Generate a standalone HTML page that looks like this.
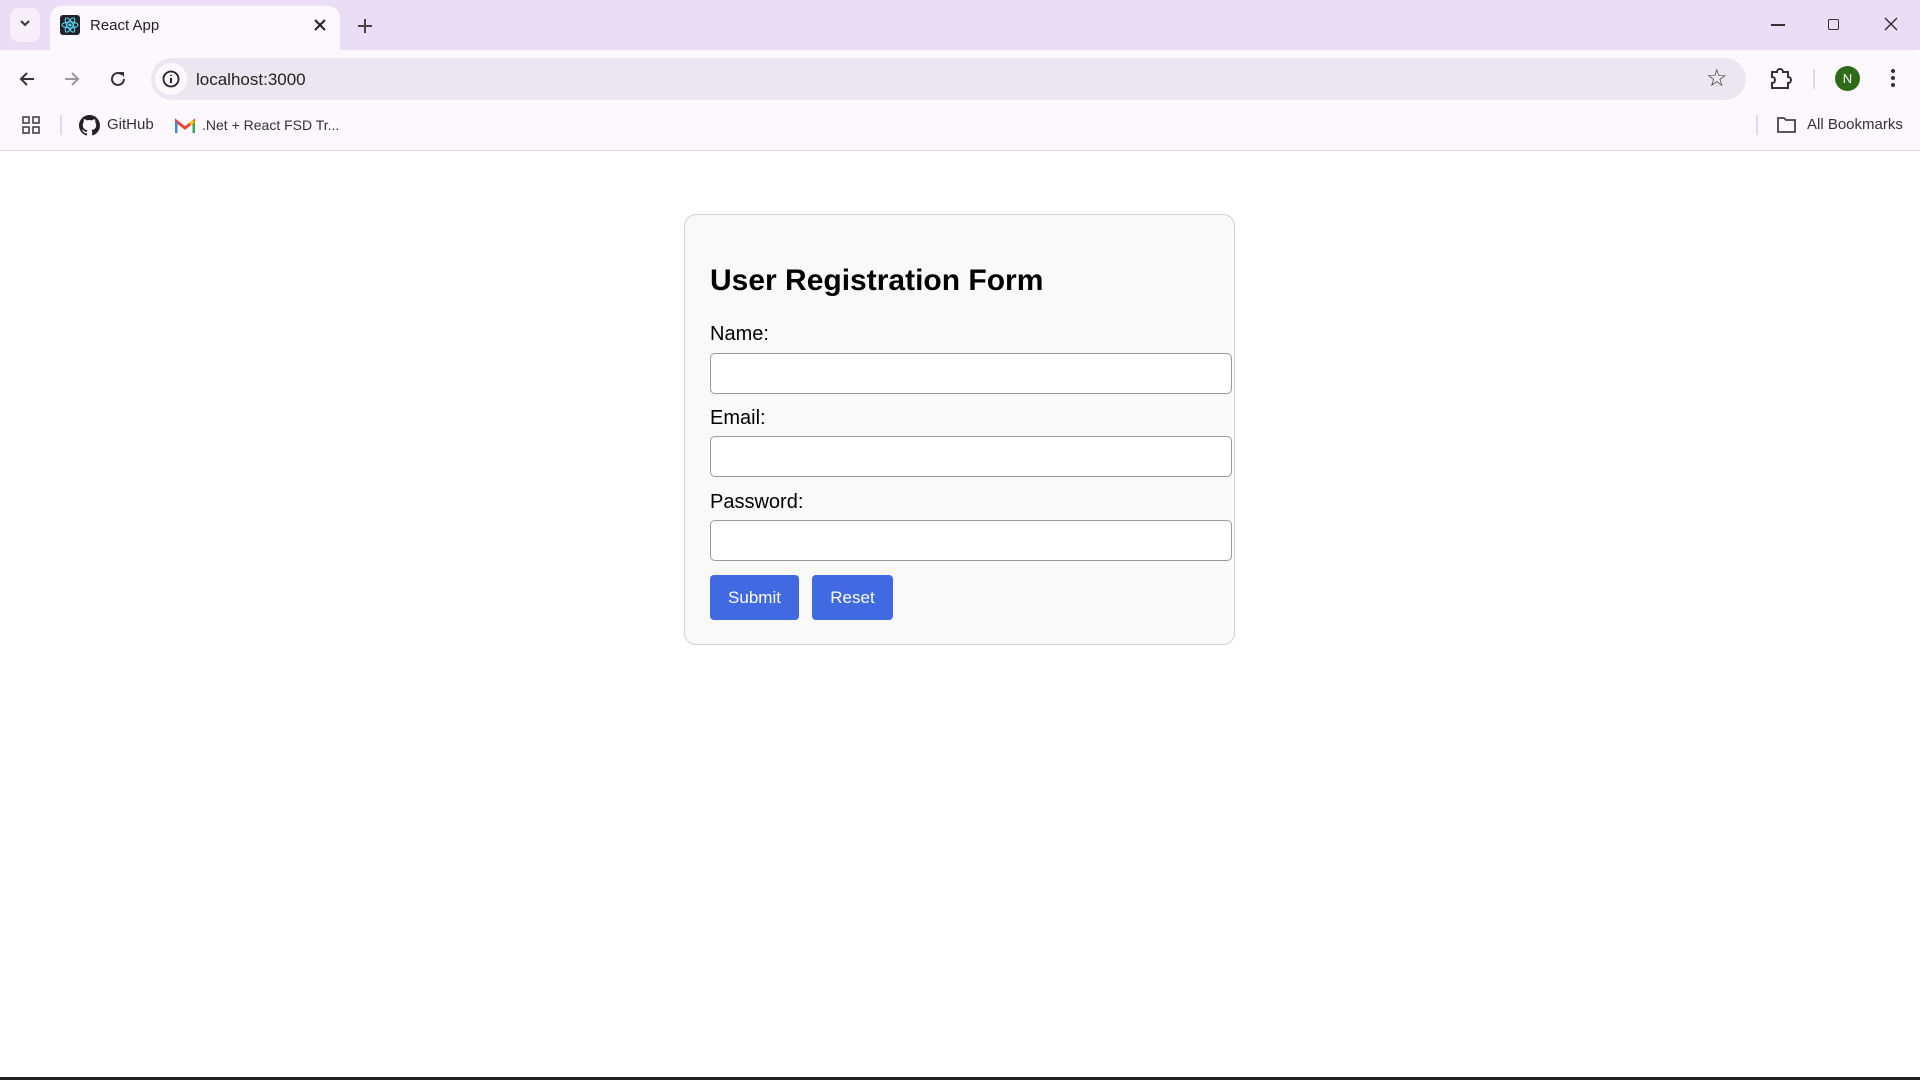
<!DOCTYPE html>
<html><head><meta charset="utf-8"><style>
*{box-sizing:border-box;margin:0;padding:0}
body{width:1920px;height:1080px;overflow:hidden;background:#fff;font-family:"Liberation Sans",sans-serif;position:relative}
.strip{position:absolute;left:0;top:0;width:1920px;height:50px;background:#e9def5}
.tb{position:absolute;left:0;top:50px;width:1920px;height:101px;background:#fdf7fe;border-bottom:1px solid #e2dde6;border-top-right-radius:12px}
.tab{position:absolute;left:50px;top:6px;width:290px;height:45px;background:#fdf7fe;border-radius:12px 12px 0 0}
.abs{position:absolute}
.omni{position:absolute;left:151px;top:58px;width:1595px;height:42px;background:#ece6f0;border-radius:21px}
.card{position:absolute;left:684px;top:214px;width:551px;height:431px;background:#f9f9f9;border:1px solid #d2d2d2;border-radius:12px}
h2{position:absolute;left:710px;top:264px;font-size:30px;font-weight:bold;color:#000}
label{position:absolute;left:710px;font-size:20px;color:#000}
.in{position:absolute;left:710px;width:522px;height:41px;background:#fff;border:1.5px solid #9a9a9a;border-radius:5px}
.btn{position:absolute;top:575px;height:45px;background:#4169e1;color:#fff;border-radius:4px;font-size:17px;text-align:center;line-height:45px}
</style></head><body>
<div class="strip"></div>
<div class="abs" style="left:10px;top:8px;width:30px;height:34px;background:#f7f0fb;border-radius:9px"></div>
<svg class="abs" style="left:19px;top:19px" width="12" height="10"><path d="M2 2l4 4 4-4" stroke="#333" stroke-width="2" fill="none"/></svg>
<div class="tab"></div>
<div class="abs" style="left:60px;top:15px;width:20px;height:20px;background:#20232a;border-radius:3px"></div>
<svg class="abs" style="left:60px;top:15px" width="20" height="20"><g fill="none" stroke="#61dafb" stroke-width="1"><ellipse cx="10" cy="10" rx="8" ry="3"/><ellipse cx="10" cy="10" rx="8" ry="3" transform="rotate(60 10 10)"/><ellipse cx="10" cy="10" rx="8" ry="3" transform="rotate(120 10 10)"/></g><circle cx="10" cy="10" r="1.5" fill="#61dafb"/></svg>
<div class="abs" style="left:90px;top:17px;font-size:15px;color:#222">React App</div>
<svg class="abs" style="left:313px;top:18px" width="14" height="14"><path d="M2 2l10 10M12 2L2 12" stroke="#222" stroke-width="2"/></svg>
<svg class="abs" style="left:357px;top:18px" width="16" height="16"><path d="M8 1v14M1 8h14" stroke="#444" stroke-width="2"/></svg>
<div class="abs" style="left:1771px;top:24px;width:14px;height:1.5px;background:#333"></div>
<div class="abs" style="left:1828px;top:19px;width:11px;height:11px;border:1.5px solid #333;border-radius:2px"></div>
<svg class="abs" style="left:1884px;top:17px" width="14" height="14"><path d="M1 1l12 12M13 1L1 13" stroke="#333" stroke-width="1.5"/></svg>
<div class="tb"></div>
<svg class="abs" style="left:16px;top:68px" width="22" height="22"><path d="M18 11H5M11 5l-6 6 6 6" stroke="#333" stroke-width="2" fill="none"/></svg>
<svg class="abs" style="left:61px;top:68px" width="22" height="22"><path d="M4 11h13M11 5l6 6-6 6" stroke="#999" stroke-width="2" fill="none"/></svg>
<svg class="abs" style="left:107px;top:68px" width="22" height="22"><path d="M17 11a6 6 0 1 1-2-4.5" stroke="#333" stroke-width="2" fill="none"/><path d="M12 4h5v5z" fill="#333"/></svg>
<div class="omni"></div>
<div class="abs" style="left:155px;top:63px;width:32px;height:32px;background:#fdf7fe;border-radius:16px"></div>
<svg class="abs" style="left:161px;top:69px" width="20" height="20"><circle cx="10" cy="10" r="7.5" stroke="#222" stroke-width="1.8" fill="none"/><path d="M10 9v5M10 6v1" stroke="#222" stroke-width="2"/></svg>
<div class="abs" style="left:196px;top:70px;font-size:17px;color:#222">localhost:3000</div>
<div class="abs" style="left:1706px;top:64px;font-size:24px;color:#333">☆</div>
<svg class="abs" style="left:1768px;top:67px" width="26" height="24"><path d="M4 5h5a3 3 0 0 1 6 0h5v5a3 3 0 0 1 0 6v5H4v-5a3 3 0 0 0 0-6z" stroke="#333" stroke-width="2" fill="none"/></svg>
<div class="abs" style="left:1813px;top:69px;width:2px;height:20px;background:#e3d8f0"></div>
<div class="abs" style="left:1835px;top:66px;width:25px;height:25px;border-radius:50%;background:#2e6a18;color:#fff;font-size:13px;text-align:center;line-height:25px">N</div>
<div class="abs" style="left:1891px;top:69px;width:4px;height:4px;border-radius:2px;background:#333;box-shadow:0 7px 0 #333,0 14px 0 #333"></div>
<svg class="abs" style="left:22px;top:116px" width="20" height="20"><g fill="none" stroke="#444" stroke-width="1.6"><rect x="1" y="1" width="6" height="6"/><rect x="11" y="1" width="6" height="6"/><rect x="1" y="11" width="6" height="6"/><rect x="11" y="11" width="6" height="6"/></g></svg>
<div class="abs" style="left:60px;top:115px;width:2px;height:20px;background:#e3d8f0"></div>
<svg class="abs" style="left:79px;top:115px" width="21" height="21" viewBox="0 0 16 16"><path fill="#222" d="M8 0C3.6 0 0 3.6 0 8c0 3.5 2.3 6.5 5.5 7.6.4.1.5-.2.5-.4v-1.4c-2.2.5-2.7-1-2.7-1-.4-.9-.9-1.2-.9-1.2-.7-.5.1-.5.1-.5.8.1 1.2.8 1.2.8.7 1.2 1.9.9 2.3.7.1-.5.3-.9.5-1.1-1.8-.2-3.6-.9-3.6-4 0-.9.3-1.6.8-2.1-.1-.2-.4-1 .1-2.1 0 0 .7-.2 2.2.8.6-.2 1.3-.3 2-.3s1.4.1 2 .3c1.5-1 2.2-.8 2.2-.8.4 1.1.2 1.9.1 2.1.5.6.8 1.3.8 2.1 0 3.1-1.9 3.7-3.6 3.9.3.3.5.8.5 1.5v2.2c0 .2.1.5.6.4C13.7 14.5 16 11.5 16 8c0-4.4-3.6-8-8-8z"/></svg>
<div class="abs" style="left:107px;top:116px;font-size:15px;color:#333">GitHub</div>
<svg class="abs" style="left:175px;top:118px" width="20" height="16"><path d="M1 15V3l9 7 9-7v12" fill="none" stroke="#ea4335" stroke-width="3"/><path d="M1 15V4" stroke="#4285f4" stroke-width="3"/><path d="M19 15V4" stroke="#34a853" stroke-width="3"/><path d="M15 6l4-3" stroke="#fbbc04" stroke-width="3"/></svg>
<div class="abs" style="left:202px;top:117px;font-size:14px;color:#333">.Net + React FSD Tr...</div>
<div class="abs" style="left:1756px;top:115px;width:2px;height:20px;background:#e3d8f0"></div>
<svg class="abs" style="left:1776px;top:115px" width="22" height="20"><path d="M2 3h6l2 2h9v12H2z" fill="none" stroke="#444" stroke-width="1.8"/></svg>
<div class="abs" style="left:1807px;top:116px;font-size:15px;color:#333">All Bookmarks</div>
<div class="card"></div>
<h2>User Registration Form</h2>
<label style="top:323px">Name:</label>
<div class="in" style="top:353px"></div>
<label style="top:407px">Email:</label>
<div class="in" style="top:436px"></div>
<label style="top:491px">Password:</label>
<div class="in" style="top:520px"></div>
<div class="btn" style="left:710px;width:89px">Submit</div>
<div class="btn" style="left:812px;width:81px">Reset</div>
<div class="abs" style="left:0;top:1077px;width:1920px;height:3px;background:#222"></div>
</body></html>
